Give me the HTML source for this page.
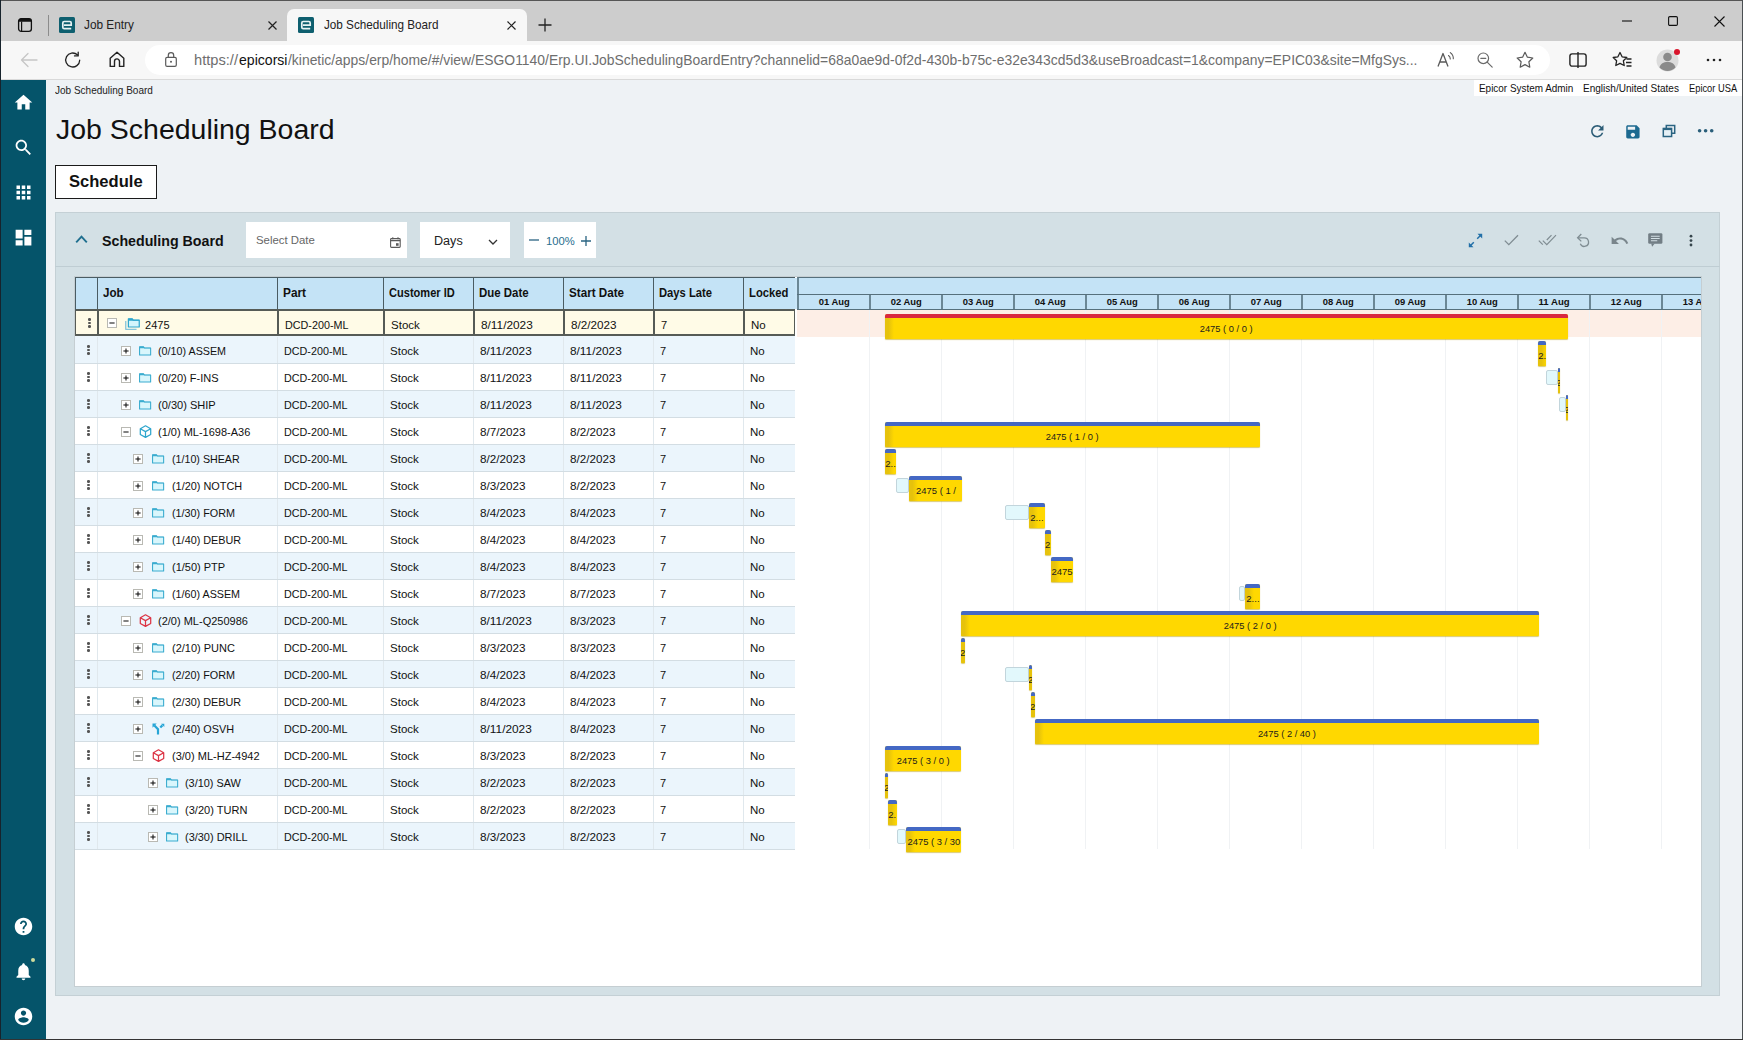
<!DOCTYPE html>
<html lang="en">
<head>
<meta charset="utf-8">
<title>Job Scheduling Board</title>
<style>
*{box-sizing:border-box;margin:0;padding:0}
html,body{width:1743px;height:1040px;overflow:hidden}
body{font-family:"Liberation Sans",sans-serif;color:#111;background:#eef2f5;position:relative}
.t{display:inline-block;transform-origin:0 50%;white-space:nowrap;line-height:inherit;vertical-align:top}
.t.tc{transform-origin:50% 50%}
svg{display:block;overflow:visible}
.ab{position:absolute}
/* browser chrome */
#tabstrip{position:absolute;left:0;top:0;width:1743px;height:41px;background:#cdcdcd;border-top:1px solid #565656}
#toolbar{position:absolute;left:0;top:41px;width:1743px;height:39px;background:#f7f7f7;border-bottom:1px solid #d9d9d9}
#frameL{position:absolute;left:0;top:0;width:1px;height:1040px;background:#17232c}
#frameR{position:absolute;left:1742px;top:0;width:1px;height:1040px;background:#4a4f52}
#frameB{position:absolute;left:0;top:1039px;width:1743px;height:1px;background:#333}
.tab{position:absolute;top:9px;height:32px;color:#222;line-height:32px}
.tab.act{background:#f7f7f7;border-radius:7px 7px 0 0}
.tab .tt{position:absolute;top:0;white-space:nowrap}
.fav{position:absolute;top:8px;width:16px;height:16px;background:#0e5f6f;border-radius:2px}
#url{position:absolute;left:145px;top:45px;width:1405px;height:30px;border-radius:15px;background:#fff}
.u{position:absolute;top:45px;line-height:30px;color:#6e6e6e;white-space:nowrap}
/* app */
#side{position:absolute;left:0;top:80px;width:46px;height:959px;background:#05546a}
#crumb{position:absolute;left:55px;top:84px;color:#222;line-height:14px;white-space:nowrap}
#chips{position:absolute;left:1474px;top:80px;width:1268px;height:16px;background:#fff}
.chip{position:absolute;top:81px;line-height:15px;color:#111;white-space:nowrap}
#title{position:absolute;left:55.5px;top:108.9px;line-height:40px;color:#111;white-space:nowrap}
#sched{position:absolute;left:55px;top:165px;width:102px;height:33.5px;border:1px solid #1a1a1a;background:#fff;line-height:31.5px;color:#111}
#sched .t{position:absolute;left:13.3px;top:0}
#panel{position:absolute;left:55px;top:212px;width:1665px;height:784px;background:#d3e0e5;border:1px solid #c4d0d5}
#phline{position:absolute;left:55px;top:266px;width:1665px;height:1px;background:#bfcdd3}
#ptitle{position:absolute;left:101.5px;top:228.8px;line-height:24px;color:#111;white-space:nowrap}
.inp{position:absolute;top:222px;height:36px;background:#fff;line-height:36px}
.inp .t{position:absolute;top:0}
#grid{position:absolute;left:75px;top:277px;width:1626px;height:709px;background:#fff;box-shadow:0 0 0 1px #c5ced2}
/* table */
#thead{position:absolute;left:75px;top:277px;width:720px;height:34px;background:#c4e3f6;border-top:1px solid #4a5c63;border-bottom:2px solid #565b56;border-left:1px solid #4a5c63}
.th{position:absolute;top:0;height:31px;line-height:31px;color:#111;border-left:1px solid #4a5c63;padding-left:5px;white-space:nowrap}
.row{position:absolute;left:75px;width:720px;height:27px;border-bottom:1px solid #d3dde3;line-height:28px;background:#fff}
.row.alt{background:#ebf5fc}
.row.sel{box-shadow:inset 1px 0 0 #565b56,inset -1px 0 0 #565b56;background:#fffbe7;height:25px;border-bottom:2px solid #565b56;line-height:29px}
.row .c{position:absolute;top:0;height:26px;border-left:1px solid #e0e8ed;padding-left:6px;white-space:nowrap;overflow:hidden}
.row.sel .c{border-left:2px solid #565b56;height:23px;padding-left:6px}
.c.job{left:22px;width:180px}.c.part{left:202px;width:106px}.c.cust{left:308px;width:90px}.c.due{left:398px;width:90px}.c.start{left:488px;width:90px}.c.late{left:578px;width:90px}.c.lock{left:668px;width:52px}
.dots{position:absolute;left:12px;top:8px;width:3px}
.row.sel .dots{left:13px;top:7px}
.dots i{display:block;width:2.5px;height:2.5px;background:#555;margin-bottom:1.2px;border-radius:1.25px}
.exw,.icw,.jt{position:absolute;top:0}
.exw svg{position:absolute;top:8.5px;left:0}
.row.sel .exw svg,.row.sel .icw svg{top:7px}
.icw svg{position:absolute;top:8.5px;left:0}
.icw svg[height="13"]{top:7px}
.icw svg[height="12"]{top:8px}
/* gantt */
.gantt{position:absolute;left:797px;top:277px;width:904px;height:709px;overflow:hidden}
.gh1{position:absolute;left:0;top:0;width:904px;height:18px;background:#c4e3f6;border-top:1px solid #56707c;border-left:2px solid #6b8795}
.gh2{position:absolute;left:0;top:17px;width:904px;height:16px;background:#c4e3f6;border-top:1px solid #56707c;border-bottom:1px solid #56707c}
.gd{position:absolute;top:0;width:72px;height:14px;border-left:2px solid #6b8795;line-height:15px;text-align:center;color:#111}
.gsel{position:absolute;left:0;top:33px;width:904px;height:27px;background:#fdeee6}
.gl{position:absolute;top:33px;width:1px;height:539px;background:#f0f2f4}
.bar{position:absolute;height:25px;background:#ffd800;box-shadow:0 1px 1px rgba(190,160,0,.55);overflow:hidden;line-height:21px;text-align:center;white-space:nowrap;color:#1c1c1c;border-radius:2px 2px 1px 1px}
.bar b{position:absolute;left:0;top:0;width:100%;height:4px;background:#4468c4}
.bar.r b{background:#d9283f}
.bar:before{content:"";position:absolute;left:0;top:4px;width:9px;height:21px;background:linear-gradient(90deg,#e6c20c 0,#e6c20c 40%,#ffd800 100%)}
.bar span.l{position:absolute;left:-40px;right:-40px;top:4px;height:21px}
.lb{position:absolute;height:14.5px;background:#e2f8fc;border:1px solid #c2d5dc;border-radius:2px}
</style>
</head>
<body>
<div id="tabstrip"></div>
<div id="toolbar"></div>
<!-- tabs -->
<div class="tab" style="left:50px;width:236px"><span class="tt" style="left:34px"><span class="t" style="font-size:12.76px;transform:scaleX(0.928);">Job Entry</span></span></div>
<div class="tab act" style="left:287px;width:240px"><span class="tt" style="left:37px"><span class="t" style="font-size:12.76px;transform:scaleX(0.918);">Job Scheduling Board</span></span></div>
<div id="url"></div>
<div class="u" style="left:194px"><span class="t" style="font-size:14.36px;transform:scaleX(1.021);">https://</span></div>
<div class="u" style="left:239px;color:#111"><span class="t" style="font-size:14.36px;transform:scaleX(0.98);">epicorsi</span></div>
<div class="u" style="left:288px"><span class="t" style="font-size:14.36px;transform:scaleX(0.968);">/kinetic/apps/erp/home/#/view/ESGO1140/Erp.UI.JobSchedulingBoardEntry?channelid=68a0ae9d-0f2d-430b-b75c-e32e343cd5d3&amp;useBroadcast=1&amp;company=EPIC03&amp;site=MfgSys...</span></div>
<div id="side"></div>
<div id="crumb"><span class="t" style="font-size:10.19px;transform:scaleX(0.983);">Job Scheduling Board</span></div>
<div id="chips"></div>
<div class="chip" style="left:1479px"><span class="t" style="font-size:10.19px;transform:scaleX(0.976);">Epicor System Admin</span></div>
<div class="chip" style="left:1583px"><span class="t" style="font-size:10.19px;transform:scaleX(0.986);">English/United States</span></div>
<div class="chip" style="left:1689px"><span class="t" style="font-size:10.19px;transform:scaleX(0.915);">Epicor USA</span></div>
<div id="title"><span class="t" style="font-size:28.36px;transform:scaleX(1.004);">Job Scheduling Board</span></div>
<div id="sched"><span class="t" style="font-size:17.28px;font-weight:bold;transform:scaleX(0.959);">Schedule</span></div>
<div id="panel"></div>
<div id="phline"></div>
<div id="ptitle"><span class="t" style="font-size:15.07px;font-weight:bold;transform:scaleX(0.944);">Scheduling Board</span></div>
<div class="inp" style="left:246px;width:161px;color:#666"><span class="ab" style="left:10px;top:0"><span class="t" style="font-size:11.08px;transform:scaleX(1.027);">Select Date</span></span></div>
<div class="inp" style="left:420px;width:90px;color:#222"><span class="ab" style="left:14.300px;top:0.700px"><span class="t" style="font-size:12.85px;transform:scaleX(0.981);">Days</span></span></div>
<div class="inp" style="left:524px;width:72px;color:#2a6f8f"><span class="ab" style="left:21.700px;top:1px"><span class="t" style="font-size:11.08px;transform:scaleX(1.013);">100%</span></span></div>
<div id="grid"></div>
<i class="ab" style="left:795px;top:278px;width:2px;height:31px;background:#c9e6f8"></i>
<div id="thead">
<span class="th" style="left:21px;width:180px"><span class="t" style="font-size:11.96px;font-weight:bold;transform:scaleX(0.972);">Job</span></span>
<span class="th" style="left:201px;width:106px"><span class="t" style="font-size:11.96px;font-weight:bold;transform:scaleX(0.992);">Part</span></span>
<span class="th" style="left:307px;width:90px"><span class="t" style="font-size:11.96px;font-weight:bold;transform:scaleX(0.925);">Customer ID</span></span>
<span class="th" style="left:397px;width:90px"><span class="t" style="font-size:11.96px;font-weight:bold;transform:scaleX(0.959);">Due Date</span></span>
<span class="th" style="left:487px;width:90px"><span class="t" style="font-size:11.96px;font-weight:bold;transform:scaleX(0.976);">Start Date</span></span>
<span class="th" style="left:577px;width:90px"><span class="t" style="font-size:11.96px;font-weight:bold;transform:scaleX(0.938);">Days Late</span></span>
<span class="th" style="left:667px;width:52px"><span class="t" style="font-size:11.96px;font-weight:bold;transform:scaleX(0.943);">Locked</span></span>
</div>

<div class="row sel" style="top:311px">
<span class="dots"><i></i><i></i><i></i></span>
<span class="c job"><span class="exw" style="left:8px"><svg class="ex" width="10" height="10" viewBox="0 0 10 10"><rect x="0.5" y="0.5" width="9" height="9" fill="#fff" stroke="#b9b9b3"/><path d="M2.4 5h5.2" stroke="#111" stroke-width="1.05"/></svg></span><span class="icw" style="left:26px"><svg class="ic" width="15" height="12.4" viewBox="0 0 16 13"><path d="M0.8 3.2v8.8h11.5" fill="none" stroke="#86c4da" stroke-width="1.4" stroke-linejoin="round"/><path d="M3.6 0.8h4.2l1 1.3h6.4v7.4h-11.6z" fill="#d3f5fc" stroke="#2fa6cd" stroke-width="1.3" stroke-linejoin="round"/><path d="M3.6 0.5h4.2l1 1.3h6.4v1h-11.6z" fill="#2fa6cd"/></svg></span><span class="jt" style="left:46.400000000000006px"><span class="t" style="font-size:11.52px;transform:scaleX(0.96);">2475</span></span></span>
<span class="c part"><span class="t" style="font-size:11.52px;transform:scaleX(0.935);">DCD-200-ML</span></span><span class="c cust"><span class="t" style="font-size:11.52px;transform:scaleX(1.0);">Stock</span></span><span class="c due"><span class="t" style="font-size:11.52px;transform:scaleX(1.027);">8/11/2023</span></span><span class="c start"><span class="t" style="font-size:11.52px;transform:scaleX(1.016);">8/2/2023</span></span><span class="c late"><span class="t" style="font-size:11.52px;transform:scaleX(0.96);">7</span></span><span class="c lock"><span class="t" style="font-size:11.52px;transform:scaleX(1.0);">No</span></span>
</div>
<div class="row alt" style="top:336px;height:2px;border:none"></div>
<div class="row alt" style="top:337px">
<span class="dots"><i></i><i></i><i></i></span>
<span class="c job"><span class="exw" style="left:22.700000000000003px"><svg class="ex" width="10" height="10" viewBox="0 0 10 10"><rect x="0.5" y="0.5" width="9" height="9" fill="#fff" stroke="#b9b9b3"/><path d="M2.4 5h5.2" stroke="#111" stroke-width="1.05"/><path d="M5 2.4v5.2" stroke="#111" stroke-width="1.05"/></svg></span><span class="icw" style="left:41px"><svg class="ic" width="12.2" height="9.6" viewBox="0 0 13 10"><path d="M0.6 0.7h4.2l1 1.3h6.6v7.4h-11.8z" fill="#d9f6fc" stroke="#3aaccf" stroke-width="1.15" stroke-linejoin="round"/><path d="M0.6 0.5h4.2l1 1.3h6.6v0.5h-11.8z" fill="#3aaccf"/></svg></span><span class="jt" style="left:60.30000000000001px"><span class="t" style="font-size:11.52px;transform:scaleX(0.933);">(0/10) ASSEM</span></span></span>
<span class="c part"><span class="t" style="font-size:11.52px;transform:scaleX(0.935);">DCD-200-ML</span></span><span class="c cust"><span class="t" style="font-size:11.52px;transform:scaleX(1.0);">Stock</span></span><span class="c due"><span class="t" style="font-size:11.52px;transform:scaleX(1.027);">8/11/2023</span></span><span class="c start"><span class="t" style="font-size:11.52px;transform:scaleX(1.027);">8/11/2023</span></span><span class="c late"><span class="t" style="font-size:11.52px;transform:scaleX(0.96);">7</span></span><span class="c lock"><span class="t" style="font-size:11.52px;transform:scaleX(1.0);">No</span></span>
</div>
<div class="row" style="top:364px">
<span class="dots"><i></i><i></i><i></i></span>
<span class="c job"><span class="exw" style="left:22.700000000000003px"><svg class="ex" width="10" height="10" viewBox="0 0 10 10"><rect x="0.5" y="0.5" width="9" height="9" fill="#fff" stroke="#b9b9b3"/><path d="M2.4 5h5.2" stroke="#111" stroke-width="1.05"/><path d="M5 2.4v5.2" stroke="#111" stroke-width="1.05"/></svg></span><span class="icw" style="left:41px"><svg class="ic" width="12.2" height="9.6" viewBox="0 0 13 10"><path d="M0.6 0.7h4.2l1 1.3h6.6v7.4h-11.8z" fill="#d9f6fc" stroke="#3aaccf" stroke-width="1.15" stroke-linejoin="round"/><path d="M0.6 0.5h4.2l1 1.3h6.6v0.5h-11.8z" fill="#3aaccf"/></svg></span><span class="jt" style="left:60.30000000000001px"><span class="t" style="font-size:11.52px;transform:scaleX(0.956);">(0/20) F-INS</span></span></span>
<span class="c part"><span class="t" style="font-size:11.52px;transform:scaleX(0.935);">DCD-200-ML</span></span><span class="c cust"><span class="t" style="font-size:11.52px;transform:scaleX(1.0);">Stock</span></span><span class="c due"><span class="t" style="font-size:11.52px;transform:scaleX(1.027);">8/11/2023</span></span><span class="c start"><span class="t" style="font-size:11.52px;transform:scaleX(1.027);">8/11/2023</span></span><span class="c late"><span class="t" style="font-size:11.52px;transform:scaleX(0.96);">7</span></span><span class="c lock"><span class="t" style="font-size:11.52px;transform:scaleX(1.0);">No</span></span>
</div>
<div class="row alt" style="top:391px">
<span class="dots"><i></i><i></i><i></i></span>
<span class="c job"><span class="exw" style="left:22.700000000000003px"><svg class="ex" width="10" height="10" viewBox="0 0 10 10"><rect x="0.5" y="0.5" width="9" height="9" fill="#fff" stroke="#b9b9b3"/><path d="M2.4 5h5.2" stroke="#111" stroke-width="1.05"/><path d="M5 2.4v5.2" stroke="#111" stroke-width="1.05"/></svg></span><span class="icw" style="left:41px"><svg class="ic" width="12.2" height="9.6" viewBox="0 0 13 10"><path d="M0.6 0.7h4.2l1 1.3h6.6v7.4h-11.8z" fill="#d9f6fc" stroke="#3aaccf" stroke-width="1.15" stroke-linejoin="round"/><path d="M0.6 0.5h4.2l1 1.3h6.6v0.5h-11.8z" fill="#3aaccf"/></svg></span><span class="jt" style="left:60.30000000000001px"><span class="t" style="font-size:11.52px;transform:scaleX(0.959);">(0/30) SHIP</span></span></span>
<span class="c part"><span class="t" style="font-size:11.52px;transform:scaleX(0.935);">DCD-200-ML</span></span><span class="c cust"><span class="t" style="font-size:11.52px;transform:scaleX(1.0);">Stock</span></span><span class="c due"><span class="t" style="font-size:11.52px;transform:scaleX(1.027);">8/11/2023</span></span><span class="c start"><span class="t" style="font-size:11.52px;transform:scaleX(1.027);">8/11/2023</span></span><span class="c late"><span class="t" style="font-size:11.52px;transform:scaleX(0.96);">7</span></span><span class="c lock"><span class="t" style="font-size:11.52px;transform:scaleX(1.0);">No</span></span>
</div>
<div class="row" style="top:418px">
<span class="dots"><i></i><i></i><i></i></span>
<span class="c job"><span class="exw" style="left:22.700000000000003px"><svg class="ex" width="10" height="10" viewBox="0 0 10 10"><rect x="0.5" y="0.5" width="9" height="9" fill="#fff" stroke="#b9b9b3"/><path d="M2.4 5h5.2" stroke="#111" stroke-width="1.05"/></svg></span><span class="icw" style="left:41px"><svg class="ic" width="13" height="13" viewBox="0 0 13 13"><path d="M6.5 0.8l5.2 2.9v5.8L6.5 12.4 1.3 9.5V3.7z M1.3 3.7l5.2 2.9 5.2-2.9M6.5 6.6v5.8" fill="none" stroke="#2fa6cd" stroke-width="1.25" stroke-linejoin="round"/></svg></span><span class="jt" style="left:60.30000000000001px"><span class="t" style="font-size:11.52px;transform:scaleX(0.955);">(1/0) ML-1698-A36</span></span></span>
<span class="c part"><span class="t" style="font-size:11.52px;transform:scaleX(0.935);">DCD-200-ML</span></span><span class="c cust"><span class="t" style="font-size:11.52px;transform:scaleX(1.0);">Stock</span></span><span class="c due"><span class="t" style="font-size:11.52px;transform:scaleX(1.016);">8/7/2023</span></span><span class="c start"><span class="t" style="font-size:11.52px;transform:scaleX(1.016);">8/2/2023</span></span><span class="c late"><span class="t" style="font-size:11.52px;transform:scaleX(0.96);">7</span></span><span class="c lock"><span class="t" style="font-size:11.52px;transform:scaleX(1.0);">No</span></span>
</div>
<div class="row alt" style="top:445px">
<span class="dots"><i></i><i></i><i></i></span>
<span class="c job"><span class="exw" style="left:35.30000000000001px"><svg class="ex" width="10" height="10" viewBox="0 0 10 10"><rect x="0.5" y="0.5" width="9" height="9" fill="#fff" stroke="#b9b9b3"/><path d="M2.4 5h5.2" stroke="#111" stroke-width="1.05"/><path d="M5 2.4v5.2" stroke="#111" stroke-width="1.05"/></svg></span><span class="icw" style="left:54.30000000000001px"><svg class="ic" width="12.2" height="9.6" viewBox="0 0 13 10"><path d="M0.6 0.7h4.2l1 1.3h6.6v7.4h-11.8z" fill="#d9f6fc" stroke="#3aaccf" stroke-width="1.15" stroke-linejoin="round"/><path d="M0.6 0.5h4.2l1 1.3h6.6v0.5h-11.8z" fill="#3aaccf"/></svg></span><span class="jt" style="left:73.80000000000001px"><span class="t" style="font-size:11.52px;transform:scaleX(0.928);">(1/10) SHEAR</span></span></span>
<span class="c part"><span class="t" style="font-size:11.52px;transform:scaleX(0.935);">DCD-200-ML</span></span><span class="c cust"><span class="t" style="font-size:11.52px;transform:scaleX(1.0);">Stock</span></span><span class="c due"><span class="t" style="font-size:11.52px;transform:scaleX(1.016);">8/2/2023</span></span><span class="c start"><span class="t" style="font-size:11.52px;transform:scaleX(1.016);">8/2/2023</span></span><span class="c late"><span class="t" style="font-size:11.52px;transform:scaleX(0.96);">7</span></span><span class="c lock"><span class="t" style="font-size:11.52px;transform:scaleX(1.0);">No</span></span>
</div>
<div class="row" style="top:472px">
<span class="dots"><i></i><i></i><i></i></span>
<span class="c job"><span class="exw" style="left:35.30000000000001px"><svg class="ex" width="10" height="10" viewBox="0 0 10 10"><rect x="0.5" y="0.5" width="9" height="9" fill="#fff" stroke="#b9b9b3"/><path d="M2.4 5h5.2" stroke="#111" stroke-width="1.05"/><path d="M5 2.4v5.2" stroke="#111" stroke-width="1.05"/></svg></span><span class="icw" style="left:54.30000000000001px"><svg class="ic" width="12.2" height="9.6" viewBox="0 0 13 10"><path d="M0.6 0.7h4.2l1 1.3h6.6v7.4h-11.8z" fill="#d9f6fc" stroke="#3aaccf" stroke-width="1.15" stroke-linejoin="round"/><path d="M0.6 0.5h4.2l1 1.3h6.6v0.5h-11.8z" fill="#3aaccf"/></svg></span><span class="jt" style="left:73.80000000000001px"><span class="t" style="font-size:11.52px;transform:scaleX(0.945);">(1/20) NOTCH</span></span></span>
<span class="c part"><span class="t" style="font-size:11.52px;transform:scaleX(0.935);">DCD-200-ML</span></span><span class="c cust"><span class="t" style="font-size:11.52px;transform:scaleX(1.0);">Stock</span></span><span class="c due"><span class="t" style="font-size:11.52px;transform:scaleX(1.016);">8/3/2023</span></span><span class="c start"><span class="t" style="font-size:11.52px;transform:scaleX(1.016);">8/2/2023</span></span><span class="c late"><span class="t" style="font-size:11.52px;transform:scaleX(0.96);">7</span></span><span class="c lock"><span class="t" style="font-size:11.52px;transform:scaleX(1.0);">No</span></span>
</div>
<div class="row alt" style="top:499px">
<span class="dots"><i></i><i></i><i></i></span>
<span class="c job"><span class="exw" style="left:35.30000000000001px"><svg class="ex" width="10" height="10" viewBox="0 0 10 10"><rect x="0.5" y="0.5" width="9" height="9" fill="#fff" stroke="#b9b9b3"/><path d="M2.4 5h5.2" stroke="#111" stroke-width="1.05"/><path d="M5 2.4v5.2" stroke="#111" stroke-width="1.05"/></svg></span><span class="icw" style="left:54.30000000000001px"><svg class="ic" width="12.2" height="9.6" viewBox="0 0 13 10"><path d="M0.6 0.7h4.2l1 1.3h6.6v7.4h-11.8z" fill="#d9f6fc" stroke="#3aaccf" stroke-width="1.15" stroke-linejoin="round"/><path d="M0.6 0.5h4.2l1 1.3h6.6v0.5h-11.8z" fill="#3aaccf"/></svg></span><span class="jt" style="left:73.80000000000001px"><span class="t" style="font-size:11.52px;transform:scaleX(0.938);">(1/30) FORM</span></span></span>
<span class="c part"><span class="t" style="font-size:11.52px;transform:scaleX(0.935);">DCD-200-ML</span></span><span class="c cust"><span class="t" style="font-size:11.52px;transform:scaleX(1.0);">Stock</span></span><span class="c due"><span class="t" style="font-size:11.52px;transform:scaleX(1.016);">8/4/2023</span></span><span class="c start"><span class="t" style="font-size:11.52px;transform:scaleX(1.016);">8/4/2023</span></span><span class="c late"><span class="t" style="font-size:11.52px;transform:scaleX(0.96);">7</span></span><span class="c lock"><span class="t" style="font-size:11.52px;transform:scaleX(1.0);">No</span></span>
</div>
<div class="row" style="top:526px">
<span class="dots"><i></i><i></i><i></i></span>
<span class="c job"><span class="exw" style="left:35.30000000000001px"><svg class="ex" width="10" height="10" viewBox="0 0 10 10"><rect x="0.5" y="0.5" width="9" height="9" fill="#fff" stroke="#b9b9b3"/><path d="M2.4 5h5.2" stroke="#111" stroke-width="1.05"/><path d="M5 2.4v5.2" stroke="#111" stroke-width="1.05"/></svg></span><span class="icw" style="left:54.30000000000001px"><svg class="ic" width="12.2" height="9.6" viewBox="0 0 13 10"><path d="M0.6 0.7h4.2l1 1.3h6.6v7.4h-11.8z" fill="#d9f6fc" stroke="#3aaccf" stroke-width="1.15" stroke-linejoin="round"/><path d="M0.6 0.5h4.2l1 1.3h6.6v0.5h-11.8z" fill="#3aaccf"/></svg></span><span class="jt" style="left:73.80000000000001px"><span class="t" style="font-size:11.52px;transform:scaleX(0.94);">(1/40) DEBUR</span></span></span>
<span class="c part"><span class="t" style="font-size:11.52px;transform:scaleX(0.935);">DCD-200-ML</span></span><span class="c cust"><span class="t" style="font-size:11.52px;transform:scaleX(1.0);">Stock</span></span><span class="c due"><span class="t" style="font-size:11.52px;transform:scaleX(1.016);">8/4/2023</span></span><span class="c start"><span class="t" style="font-size:11.52px;transform:scaleX(1.016);">8/4/2023</span></span><span class="c late"><span class="t" style="font-size:11.52px;transform:scaleX(0.96);">7</span></span><span class="c lock"><span class="t" style="font-size:11.52px;transform:scaleX(1.0);">No</span></span>
</div>
<div class="row alt" style="top:553px">
<span class="dots"><i></i><i></i><i></i></span>
<span class="c job"><span class="exw" style="left:35.30000000000001px"><svg class="ex" width="10" height="10" viewBox="0 0 10 10"><rect x="0.5" y="0.5" width="9" height="9" fill="#fff" stroke="#b9b9b3"/><path d="M2.4 5h5.2" stroke="#111" stroke-width="1.05"/><path d="M5 2.4v5.2" stroke="#111" stroke-width="1.05"/></svg></span><span class="icw" style="left:54.30000000000001px"><svg class="ic" width="12.2" height="9.6" viewBox="0 0 13 10"><path d="M0.6 0.7h4.2l1 1.3h6.6v7.4h-11.8z" fill="#d9f6fc" stroke="#3aaccf" stroke-width="1.15" stroke-linejoin="round"/><path d="M0.6 0.5h4.2l1 1.3h6.6v0.5h-11.8z" fill="#3aaccf"/></svg></span><span class="jt" style="left:73.80000000000001px"><span class="t" style="font-size:11.52px;transform:scaleX(0.954);">(1/50) PTP</span></span></span>
<span class="c part"><span class="t" style="font-size:11.52px;transform:scaleX(0.935);">DCD-200-ML</span></span><span class="c cust"><span class="t" style="font-size:11.52px;transform:scaleX(1.0);">Stock</span></span><span class="c due"><span class="t" style="font-size:11.52px;transform:scaleX(1.016);">8/4/2023</span></span><span class="c start"><span class="t" style="font-size:11.52px;transform:scaleX(1.016);">8/4/2023</span></span><span class="c late"><span class="t" style="font-size:11.52px;transform:scaleX(0.96);">7</span></span><span class="c lock"><span class="t" style="font-size:11.52px;transform:scaleX(1.0);">No</span></span>
</div>
<div class="row" style="top:580px">
<span class="dots"><i></i><i></i><i></i></span>
<span class="c job"><span class="exw" style="left:35.30000000000001px"><svg class="ex" width="10" height="10" viewBox="0 0 10 10"><rect x="0.5" y="0.5" width="9" height="9" fill="#fff" stroke="#b9b9b3"/><path d="M2.4 5h5.2" stroke="#111" stroke-width="1.05"/><path d="M5 2.4v5.2" stroke="#111" stroke-width="1.05"/></svg></span><span class="icw" style="left:54.30000000000001px"><svg class="ic" width="12.2" height="9.6" viewBox="0 0 13 10"><path d="M0.6 0.7h4.2l1 1.3h6.6v7.4h-11.8z" fill="#d9f6fc" stroke="#3aaccf" stroke-width="1.15" stroke-linejoin="round"/><path d="M0.6 0.5h4.2l1 1.3h6.6v0.5h-11.8z" fill="#3aaccf"/></svg></span><span class="jt" style="left:73.80000000000001px"><span class="t" style="font-size:11.52px;transform:scaleX(0.933);">(1/60) ASSEM</span></span></span>
<span class="c part"><span class="t" style="font-size:11.52px;transform:scaleX(0.935);">DCD-200-ML</span></span><span class="c cust"><span class="t" style="font-size:11.52px;transform:scaleX(1.0);">Stock</span></span><span class="c due"><span class="t" style="font-size:11.52px;transform:scaleX(1.016);">8/7/2023</span></span><span class="c start"><span class="t" style="font-size:11.52px;transform:scaleX(1.016);">8/7/2023</span></span><span class="c late"><span class="t" style="font-size:11.52px;transform:scaleX(0.96);">7</span></span><span class="c lock"><span class="t" style="font-size:11.52px;transform:scaleX(1.0);">No</span></span>
</div>
<div class="row alt" style="top:607px">
<span class="dots"><i></i><i></i><i></i></span>
<span class="c job"><span class="exw" style="left:22.700000000000003px"><svg class="ex" width="10" height="10" viewBox="0 0 10 10"><rect x="0.5" y="0.5" width="9" height="9" fill="#fff" stroke="#b9b9b3"/><path d="M2.4 5h5.2" stroke="#111" stroke-width="1.05"/></svg></span><span class="icw" style="left:41px"><svg class="ic" width="13" height="13" viewBox="0 0 13 13"><path d="M6.5 0.8l5.2 2.9v5.8L6.5 12.4 1.3 9.5V3.7z M1.3 3.7l5.2 2.9 5.2-2.9M6.5 6.6v5.8" fill="none" stroke="#dc3545" stroke-width="1.25" stroke-linejoin="round"/></svg></span><span class="jt" style="left:60.30000000000001px"><span class="t" style="font-size:11.52px;transform:scaleX(0.956);">(2/0) ML-Q250986</span></span></span>
<span class="c part"><span class="t" style="font-size:11.52px;transform:scaleX(0.935);">DCD-200-ML</span></span><span class="c cust"><span class="t" style="font-size:11.52px;transform:scaleX(1.0);">Stock</span></span><span class="c due"><span class="t" style="font-size:11.52px;transform:scaleX(1.027);">8/11/2023</span></span><span class="c start"><span class="t" style="font-size:11.52px;transform:scaleX(1.016);">8/3/2023</span></span><span class="c late"><span class="t" style="font-size:11.52px;transform:scaleX(0.96);">7</span></span><span class="c lock"><span class="t" style="font-size:11.52px;transform:scaleX(1.0);">No</span></span>
</div>
<div class="row" style="top:634px">
<span class="dots"><i></i><i></i><i></i></span>
<span class="c job"><span class="exw" style="left:35.30000000000001px"><svg class="ex" width="10" height="10" viewBox="0 0 10 10"><rect x="0.5" y="0.5" width="9" height="9" fill="#fff" stroke="#b9b9b3"/><path d="M2.4 5h5.2" stroke="#111" stroke-width="1.05"/><path d="M5 2.4v5.2" stroke="#111" stroke-width="1.05"/></svg></span><span class="icw" style="left:54.30000000000001px"><svg class="ic" width="12.2" height="9.6" viewBox="0 0 13 10"><path d="M0.6 0.7h4.2l1 1.3h6.6v7.4h-11.8z" fill="#d9f6fc" stroke="#3aaccf" stroke-width="1.15" stroke-linejoin="round"/><path d="M0.6 0.5h4.2l1 1.3h6.6v0.5h-11.8z" fill="#3aaccf"/></svg></span><span class="jt" style="left:73.80000000000001px"><span class="t" style="font-size:11.52px;transform:scaleX(0.953);">(2/10) PUNC</span></span></span>
<span class="c part"><span class="t" style="font-size:11.52px;transform:scaleX(0.935);">DCD-200-ML</span></span><span class="c cust"><span class="t" style="font-size:11.52px;transform:scaleX(1.0);">Stock</span></span><span class="c due"><span class="t" style="font-size:11.52px;transform:scaleX(1.016);">8/3/2023</span></span><span class="c start"><span class="t" style="font-size:11.52px;transform:scaleX(1.016);">8/3/2023</span></span><span class="c late"><span class="t" style="font-size:11.52px;transform:scaleX(0.96);">7</span></span><span class="c lock"><span class="t" style="font-size:11.52px;transform:scaleX(1.0);">No</span></span>
</div>
<div class="row alt" style="top:661px">
<span class="dots"><i></i><i></i><i></i></span>
<span class="c job"><span class="exw" style="left:35.30000000000001px"><svg class="ex" width="10" height="10" viewBox="0 0 10 10"><rect x="0.5" y="0.5" width="9" height="9" fill="#fff" stroke="#b9b9b3"/><path d="M2.4 5h5.2" stroke="#111" stroke-width="1.05"/><path d="M5 2.4v5.2" stroke="#111" stroke-width="1.05"/></svg></span><span class="icw" style="left:54.30000000000001px"><svg class="ic" width="12.2" height="9.6" viewBox="0 0 13 10"><path d="M0.6 0.7h4.2l1 1.3h6.6v7.4h-11.8z" fill="#d9f6fc" stroke="#3aaccf" stroke-width="1.15" stroke-linejoin="round"/><path d="M0.6 0.5h4.2l1 1.3h6.6v0.5h-11.8z" fill="#3aaccf"/></svg></span><span class="jt" style="left:73.80000000000001px"><span class="t" style="font-size:11.52px;transform:scaleX(0.938);">(2/20) FORM</span></span></span>
<span class="c part"><span class="t" style="font-size:11.52px;transform:scaleX(0.935);">DCD-200-ML</span></span><span class="c cust"><span class="t" style="font-size:11.52px;transform:scaleX(1.0);">Stock</span></span><span class="c due"><span class="t" style="font-size:11.52px;transform:scaleX(1.016);">8/4/2023</span></span><span class="c start"><span class="t" style="font-size:11.52px;transform:scaleX(1.016);">8/4/2023</span></span><span class="c late"><span class="t" style="font-size:11.52px;transform:scaleX(0.96);">7</span></span><span class="c lock"><span class="t" style="font-size:11.52px;transform:scaleX(1.0);">No</span></span>
</div>
<div class="row" style="top:688px">
<span class="dots"><i></i><i></i><i></i></span>
<span class="c job"><span class="exw" style="left:35.30000000000001px"><svg class="ex" width="10" height="10" viewBox="0 0 10 10"><rect x="0.5" y="0.5" width="9" height="9" fill="#fff" stroke="#b9b9b3"/><path d="M2.4 5h5.2" stroke="#111" stroke-width="1.05"/><path d="M5 2.4v5.2" stroke="#111" stroke-width="1.05"/></svg></span><span class="icw" style="left:54.30000000000001px"><svg class="ic" width="12.2" height="9.6" viewBox="0 0 13 10"><path d="M0.6 0.7h4.2l1 1.3h6.6v7.4h-11.8z" fill="#d9f6fc" stroke="#3aaccf" stroke-width="1.15" stroke-linejoin="round"/><path d="M0.6 0.5h4.2l1 1.3h6.6v0.5h-11.8z" fill="#3aaccf"/></svg></span><span class="jt" style="left:73.80000000000001px"><span class="t" style="font-size:11.52px;transform:scaleX(0.94);">(2/30) DEBUR</span></span></span>
<span class="c part"><span class="t" style="font-size:11.52px;transform:scaleX(0.935);">DCD-200-ML</span></span><span class="c cust"><span class="t" style="font-size:11.52px;transform:scaleX(1.0);">Stock</span></span><span class="c due"><span class="t" style="font-size:11.52px;transform:scaleX(1.016);">8/4/2023</span></span><span class="c start"><span class="t" style="font-size:11.52px;transform:scaleX(1.016);">8/4/2023</span></span><span class="c late"><span class="t" style="font-size:11.52px;transform:scaleX(0.96);">7</span></span><span class="c lock"><span class="t" style="font-size:11.52px;transform:scaleX(1.0);">No</span></span>
</div>
<div class="row alt" style="top:715px">
<span class="dots"><i></i><i></i><i></i></span>
<span class="c job"><span class="exw" style="left:35.30000000000001px"><svg class="ex" width="10" height="10" viewBox="0 0 10 10"><rect x="0.5" y="0.5" width="9" height="9" fill="#fff" stroke="#b9b9b3"/><path d="M2.4 5h5.2" stroke="#111" stroke-width="1.05"/><path d="M5 2.4v5.2" stroke="#111" stroke-width="1.05"/></svg></span><span class="icw" style="left:54.30000000000001px"><svg class="ic" width="13" height="12" viewBox="0 0 13 12"><path d="M2.400 2.400L6 6.300v5.300M10.400 2.400L8.300 4.500" fill="none" stroke="#27a5d6" stroke-width="2.200"/><path d="M0.500 0.500h4.200l-4.200 4.200zM12.300 0.700h-3.200l3.200 3.200z" fill="#27a5d6"/></svg></span><span class="jt" style="left:73.80000000000001px"><span class="t" style="font-size:11.52px;transform:scaleX(0.941);">(2/40) OSVH</span></span></span>
<span class="c part"><span class="t" style="font-size:11.52px;transform:scaleX(0.935);">DCD-200-ML</span></span><span class="c cust"><span class="t" style="font-size:11.52px;transform:scaleX(1.0);">Stock</span></span><span class="c due"><span class="t" style="font-size:11.52px;transform:scaleX(1.027);">8/11/2023</span></span><span class="c start"><span class="t" style="font-size:11.52px;transform:scaleX(1.016);">8/4/2023</span></span><span class="c late"><span class="t" style="font-size:11.52px;transform:scaleX(0.96);">7</span></span><span class="c lock"><span class="t" style="font-size:11.52px;transform:scaleX(1.0);">No</span></span>
</div>
<div class="row" style="top:742px">
<span class="dots"><i></i><i></i><i></i></span>
<span class="c job"><span class="exw" style="left:35.30000000000001px"><svg class="ex" width="10" height="10" viewBox="0 0 10 10"><rect x="0.5" y="0.5" width="9" height="9" fill="#fff" stroke="#b9b9b3"/><path d="M2.4 5h5.2" stroke="#111" stroke-width="1.05"/></svg></span><span class="icw" style="left:54.30000000000001px"><svg class="ic" width="13" height="13" viewBox="0 0 13 13"><path d="M6.5 0.8l5.2 2.9v5.8L6.5 12.4 1.3 9.5V3.7z M1.3 3.7l5.2 2.9 5.2-2.9M6.5 6.6v5.8" fill="none" stroke="#dc3545" stroke-width="1.25" stroke-linejoin="round"/></svg></span><span class="jt" style="left:73.80000000000001px"><span class="t" style="font-size:11.52px;transform:scaleX(0.957);">(3/0) ML-HZ-4942</span></span></span>
<span class="c part"><span class="t" style="font-size:11.52px;transform:scaleX(0.935);">DCD-200-ML</span></span><span class="c cust"><span class="t" style="font-size:11.52px;transform:scaleX(1.0);">Stock</span></span><span class="c due"><span class="t" style="font-size:11.52px;transform:scaleX(1.016);">8/3/2023</span></span><span class="c start"><span class="t" style="font-size:11.52px;transform:scaleX(1.016);">8/2/2023</span></span><span class="c late"><span class="t" style="font-size:11.52px;transform:scaleX(0.96);">7</span></span><span class="c lock"><span class="t" style="font-size:11.52px;transform:scaleX(1.0);">No</span></span>
</div>
<div class="row alt" style="top:769px">
<span class="dots"><i></i><i></i><i></i></span>
<span class="c job"><span class="exw" style="left:49.599999999999994px"><svg class="ex" width="10" height="10" viewBox="0 0 10 10"><rect x="0.5" y="0.5" width="9" height="9" fill="#fff" stroke="#b9b9b3"/><path d="M2.4 5h5.2" stroke="#111" stroke-width="1.05"/><path d="M5 2.4v5.2" stroke="#111" stroke-width="1.05"/></svg></span><span class="icw" style="left:68px"><svg class="ic" width="12.2" height="9.6" viewBox="0 0 13 10"><path d="M0.6 0.7h4.2l1 1.3h6.6v7.4h-11.8z" fill="#d9f6fc" stroke="#3aaccf" stroke-width="1.15" stroke-linejoin="round"/><path d="M0.6 0.5h4.2l1 1.3h6.6v0.5h-11.8z" fill="#3aaccf"/></svg></span><span class="jt" style="left:87.30000000000001px"><span class="t" style="font-size:11.52px;transform:scaleX(0.945);">(3/10) SAW</span></span></span>
<span class="c part"><span class="t" style="font-size:11.52px;transform:scaleX(0.935);">DCD-200-ML</span></span><span class="c cust"><span class="t" style="font-size:11.52px;transform:scaleX(1.0);">Stock</span></span><span class="c due"><span class="t" style="font-size:11.52px;transform:scaleX(1.016);">8/2/2023</span></span><span class="c start"><span class="t" style="font-size:11.52px;transform:scaleX(1.016);">8/2/2023</span></span><span class="c late"><span class="t" style="font-size:11.52px;transform:scaleX(0.96);">7</span></span><span class="c lock"><span class="t" style="font-size:11.52px;transform:scaleX(1.0);">No</span></span>
</div>
<div class="row" style="top:796px">
<span class="dots"><i></i><i></i><i></i></span>
<span class="c job"><span class="exw" style="left:49.599999999999994px"><svg class="ex" width="10" height="10" viewBox="0 0 10 10"><rect x="0.5" y="0.5" width="9" height="9" fill="#fff" stroke="#b9b9b3"/><path d="M2.4 5h5.2" stroke="#111" stroke-width="1.05"/><path d="M5 2.4v5.2" stroke="#111" stroke-width="1.05"/></svg></span><span class="icw" style="left:68px"><svg class="ic" width="12.2" height="9.6" viewBox="0 0 13 10"><path d="M0.6 0.7h4.2l1 1.3h6.6v7.4h-11.8z" fill="#d9f6fc" stroke="#3aaccf" stroke-width="1.15" stroke-linejoin="round"/><path d="M0.6 0.5h4.2l1 1.3h6.6v0.5h-11.8z" fill="#3aaccf"/></svg></span><span class="jt" style="left:87.30000000000001px"><span class="t" style="font-size:11.52px;transform:scaleX(0.959);">(3/20) TURN</span></span></span>
<span class="c part"><span class="t" style="font-size:11.52px;transform:scaleX(0.935);">DCD-200-ML</span></span><span class="c cust"><span class="t" style="font-size:11.52px;transform:scaleX(1.0);">Stock</span></span><span class="c due"><span class="t" style="font-size:11.52px;transform:scaleX(1.016);">8/2/2023</span></span><span class="c start"><span class="t" style="font-size:11.52px;transform:scaleX(1.016);">8/2/2023</span></span><span class="c late"><span class="t" style="font-size:11.52px;transform:scaleX(0.96);">7</span></span><span class="c lock"><span class="t" style="font-size:11.52px;transform:scaleX(1.0);">No</span></span>
</div>
<div class="row alt" style="top:823px">
<span class="dots"><i></i><i></i><i></i></span>
<span class="c job"><span class="exw" style="left:49.599999999999994px"><svg class="ex" width="10" height="10" viewBox="0 0 10 10"><rect x="0.5" y="0.5" width="9" height="9" fill="#fff" stroke="#b9b9b3"/><path d="M2.4 5h5.2" stroke="#111" stroke-width="1.05"/><path d="M5 2.4v5.2" stroke="#111" stroke-width="1.05"/></svg></span><span class="icw" style="left:68px"><svg class="ic" width="12.2" height="9.6" viewBox="0 0 13 10"><path d="M0.6 0.7h4.2l1 1.3h6.6v7.4h-11.8z" fill="#d9f6fc" stroke="#3aaccf" stroke-width="1.15" stroke-linejoin="round"/><path d="M0.6 0.5h4.2l1 1.3h6.6v0.5h-11.8z" fill="#3aaccf"/></svg></span><span class="jt" style="left:87.30000000000001px"><span class="t" style="font-size:11.52px;transform:scaleX(0.951);">(3/30) DRILL</span></span></span>
<span class="c part"><span class="t" style="font-size:11.52px;transform:scaleX(0.935);">DCD-200-ML</span></span><span class="c cust"><span class="t" style="font-size:11.52px;transform:scaleX(1.0);">Stock</span></span><span class="c due"><span class="t" style="font-size:11.52px;transform:scaleX(1.016);">8/3/2023</span></span><span class="c start"><span class="t" style="font-size:11.52px;transform:scaleX(1.016);">8/2/2023</span></span><span class="c late"><span class="t" style="font-size:11.52px;transform:scaleX(0.96);">7</span></span><span class="c lock"><span class="t" style="font-size:11.52px;transform:scaleX(1.0);">No</span></span>
</div>
<div class="gantt">
<div class="gh1"></div><div class="gh2">
<span class="gd" style="left:0px"><span class="t tc" style="font-size:9.31px;font-weight:bold;transform:scaleX(1.011);">01 Aug</span></span>
<span class="gd" style="left:72px"><span class="t tc" style="font-size:9.31px;font-weight:bold;transform:scaleX(1.011);">02 Aug</span></span>
<span class="gd" style="left:144px"><span class="t tc" style="font-size:9.31px;font-weight:bold;transform:scaleX(1.011);">03 Aug</span></span>
<span class="gd" style="left:216px"><span class="t tc" style="font-size:9.31px;font-weight:bold;transform:scaleX(1.011);">04 Aug</span></span>
<span class="gd" style="left:288px"><span class="t tc" style="font-size:9.31px;font-weight:bold;transform:scaleX(1.011);">05 Aug</span></span>
<span class="gd" style="left:360px"><span class="t tc" style="font-size:9.31px;font-weight:bold;transform:scaleX(1.011);">06 Aug</span></span>
<span class="gd" style="left:432px"><span class="t tc" style="font-size:9.31px;font-weight:bold;transform:scaleX(1.011);">07 Aug</span></span>
<span class="gd" style="left:504px"><span class="t tc" style="font-size:9.31px;font-weight:bold;transform:scaleX(1.011);">08 Aug</span></span>
<span class="gd" style="left:576px"><span class="t tc" style="font-size:9.31px;font-weight:bold;transform:scaleX(1.011);">09 Aug</span></span>
<span class="gd" style="left:648px"><span class="t tc" style="font-size:9.31px;font-weight:bold;transform:scaleX(1.011);">10 Aug</span></span>
<span class="gd" style="left:720px"><span class="t tc" style="font-size:9.31px;font-weight:bold;transform:scaleX(1.029);">11 Aug</span></span>
<span class="gd" style="left:792px"><span class="t tc" style="font-size:9.31px;font-weight:bold;transform:scaleX(1.011);">12 Aug</span></span>
<span class="gd" style="left:864px"><span class="t tc" style="font-size:9.31px;font-weight:bold;transform:scaleX(1.011);">13 Aug</span></span>
</div>
<div class="gsel"></div>
<i class="gl" style="left:72px"></i>
<i class="gl" style="left:144px"></i>
<i class="gl" style="left:216px"></i>
<i class="gl" style="left:288px"></i>
<i class="gl" style="left:360px"></i>
<i class="gl" style="left:432px"></i>
<i class="gl" style="left:504px"></i>
<i class="gl" style="left:576px"></i>
<i class="gl" style="left:648px"></i>
<i class="gl" style="left:720px"></i>
<i class="gl" style="left:792px"></i>
<i class="gl" style="left:864px"></i>
<div class="bar r" style="left:88px;top:37px;width:683px"><b></b><span class="l"><span class="t tc" style="font-size:9.93px;transform:scaleX(0.937);">2475 ( 0 / 0 )</span></span></div>
<div class="bar b" style="left:741px;top:64px;width:8px"><b></b><span class="l"><span class="t tc" style="font-size:9.93px;transform:scaleX(0.962);">2.</span></span></div>
<i class="lb" style="left:749px;top:93px;width:12px"></i>
<div class="bar b" style="left:761px;top:91px;width:2px"><b></b><span class="l"><span class="t tc" style="font-size:9.93px;transform:scaleX(0.961);">2</span></span></div>
<i class="lb" style="left:762px;top:120px;width:7px"></i>
<div class="bar b" style="left:769px;top:118px;width:2px"><b></b><span class="l"><span class="t tc" style="font-size:9.93px;transform:scaleX(0.961);">2</span></span></div>
<div class="bar b" style="left:88px;top:145px;width:375px"><b></b><span class="l"><span class="t tc" style="font-size:9.93px;transform:scaleX(0.937);">2475 ( 1 / 0 )</span></span></div>
<div class="bar b" style="left:88px;top:172px;width:11px"><b></b><span class="l"><span class="t tc" style="font-size:9.93px;transform:scaleX(0.963);">2..</span></span></div>
<i class="lb" style="left:99px;top:201px;width:13px"></i>
<div class="bar b" style="left:112px;top:199px;width:53px"><b></b><span class="l"><span class="t tc" style="font-size:9.93px;transform:scaleX(0.952);">2475 ( 1 /</span></span></div>
<i class="lb" style="left:208px;top:228px;width:24px"></i>
<div class="bar b" style="left:232px;top:226px;width:16px"><b></b><span class="l"><span class="t tc" style="font-size:9.93px;transform:scaleX(0.963);">2...</span></span></div>
<div class="bar b" style="left:248px;top:253px;width:6px"><b></b><span class="l"><span class="t tc" style="font-size:9.93px;transform:scaleX(0.961);">2</span></span></div>
<div class="bar b" style="left:254px;top:280px;width:22px"><b></b><span class="l"><span class="t tc" style="font-size:9.93px;transform:scaleX(0.961);">2475</span></span></div>
<i class="lb" style="left:442px;top:309px;width:6px"></i>
<div class="bar b" style="left:448px;top:307px;width:15px"><b></b><span class="l"><span class="t tc" style="font-size:9.93px;transform:scaleX(0.963);">2...</span></span></div>
<div class="bar b" style="left:164px;top:334px;width:577.5px"><b></b><span class="l"><span class="t tc" style="font-size:9.93px;transform:scaleX(0.937);">2475 ( 2 / 0 )</span></span></div>
<div class="bar b" style="left:164px;top:361px;width:4px"><b></b><span class="l"><span class="t tc" style="font-size:9.93px;transform:scaleX(0.961);">2</span></span></div>
<i class="lb" style="left:208px;top:390px;width:24px"></i>
<div class="bar b" style="left:232px;top:388px;width:3px"><b></b><span class="l"><span class="t tc" style="font-size:9.93px;transform:scaleX(0.961);">2</span></span></div>
<div class="bar b" style="left:234px;top:415px;width:4px"><b></b><span class="l"><span class="t tc" style="font-size:9.93px;transform:scaleX(0.961);">2</span></span></div>
<div class="bar b" style="left:238px;top:442px;width:503.5px"><b></b><span class="l"><span class="t tc" style="font-size:9.93px;transform:scaleX(0.939);">2475 ( 2 / 40 )</span></span></div>
<div class="bar b" style="left:88px;top:469px;width:76px"><b></b><span class="l"><span class="t tc" style="font-size:9.93px;transform:scaleX(0.937);">2475 ( 3 / 0 )</span></span></div>
<div class="bar b" style="left:88px;top:496px;width:3px"><b></b><span class="l"><span class="t tc" style="font-size:9.93px;transform:scaleX(0.961);">2</span></span></div>
<div class="bar b" style="left:91px;top:523px;width:9px"><b></b><span class="l"><span class="t tc" style="font-size:9.93px;transform:scaleX(0.962);">2.</span></span></div>
<i class="lb" style="left:100px;top:552px;width:9px"></i>
<div class="bar b" style="left:109px;top:550px;width:55px"><b></b><span class="l"><span class="t tc" style="font-size:9.93px;transform:scaleX(0.945);">2475 ( 3 / 30</span></span></div>
</div>
<!-- browser chrome icons -->
<svg class="ab" style="left:17px;top:17px" width="16" height="16" viewBox="0 0 16 16"><rect x="1.6" y="1.6" width="12.8" height="12.8" rx="2.6" fill="none" stroke="#111" stroke-width="1.3"/><path d="M1.6 4.2a2.6 2.6 0 0 1 2.6-2.6h7.6a2.6 2.6 0 0 1 2.6 2.6v0.6h-12.8z" fill="#111"/><path d="M4.6 4.5v9.8" stroke="#111" stroke-width="1.2"/></svg>
<i class="ab" style="left:48px;top:15px;width:1px;height:21px;background:#8c8c8c"></i>
<svg class="ab" style="left:59px;top:17px" width="16" height="16" viewBox="0 0 16 16"><rect width="16" height="16" rx="1.5" fill="#0e5f6f"/><path d="M5 8.2h7.2V5.9a1.4 1.4 0 0 0-1.4-1.4H5.2A1.4 1.4 0 0 0 3.800 5.900v4.400A1.400 1.400 0 0 0 5.200 11.700h7" fill="none" stroke="#e8f3f4" stroke-width="1.7"/></svg>
<svg class="ab" style="left:298px;top:17px" width="16" height="16" viewBox="0 0 16 16"><rect width="16" height="16" rx="1.5" fill="#0e5f6f"/><path d="M5 8.2h7.2V5.9a1.4 1.4 0 0 0-1.4-1.4H5.2A1.4 1.4 0 0 0 3.800 5.900v4.400A1.400 1.400 0 0 0 5.200 11.700h7" fill="none" stroke="#e8f3f4" stroke-width="1.7"/></svg>
<svg class="ab" style="left:268px;top:21px" width="9" height="9" viewBox="0 0 9 9"><path d="M0.5 0.5l8 8M8.500 0.500l-8 8" stroke="#222" stroke-width="1.2"/></svg>
<svg class="ab" style="left:507px;top:21px" width="9" height="9" viewBox="0 0 9 9"><path d="M0.5 0.500l8 8M8.500 0.500l-8 8" stroke="#222" stroke-width="1.2"/></svg>
<svg class="ab" style="left:538px;top:18px" width="14" height="14" viewBox="0 0 14 14"><path d="M7 0.500v13M0.500 7h13" stroke="#222" stroke-width="1.3"/></svg>
<!-- window controls -->
<svg class="ab" style="left:1622px;top:20px" width="10" height="2" viewBox="0 0 10 2"><path d="M0 1h10" stroke="#111" stroke-width="1.1"/></svg>
<svg class="ab" style="left:1668px;top:16px" width="10" height="10" viewBox="0 0 10 10"><rect x="0.600" y="0.600" width="8.800" height="8.800" rx="1.2" fill="none" stroke="#111" stroke-width="1.1"/></svg>
<svg class="ab" style="left:1714px;top:16px" width="11" height="11" viewBox="0 0 11 11"><path d="M0.500 0.500l10 10M10.500 0.500l-10 10" stroke="#111" stroke-width="1.1"/></svg>
<!-- nav icons -->
<svg class="ab" style="left:20px;top:52px" width="18" height="16" viewBox="0 0 18 16"><path d="M1.500 8h15.500M8 1.500L1.500 8 8 14.500" fill="none" stroke="#c6c6c6" stroke-width="1.3" stroke-linecap="round" stroke-linejoin="round"/></svg>
<svg class="ab" style="left:64px;top:51px" width="18" height="18" viewBox="0 0 18 18"><path d="M15.700 9.200A7 7 0 1 1 13.400 3.800" fill="none" stroke="#222" stroke-width="1.3" stroke-linecap="round"/><path d="M14.200 1.200v3.700h-3.700" fill="none" stroke="#222" stroke-width="1.300" stroke-linecap="round" stroke-linejoin="round"/></svg>
<svg class="ab" style="left:109px;top:51px" width="16" height="17" viewBox="0 0 16 17"><path d="M1.200 7.300L8 1.200l6.800 6.100v8.100h-4.300v-5a2.500 2.500 0 0 0-5 0v5H1.200z" fill="none" stroke="#222" stroke-width="1.4" stroke-linejoin="round"/></svg>
<svg class="ab" style="left:165px;top:52px" width="12" height="15" viewBox="0 0 12 15"><rect x="0.700" y="5.300" width="10.600" height="9" rx="1.400" fill="none" stroke="#5a5a5a" stroke-width="1.2"/><path d="M3.300 5.300V3.400a2.700 2.700 0 0 1 5.400 0v1.900" fill="none" stroke="#5a5a5a" stroke-width="1.200"/><circle cx="6" cy="9.800" r="1" fill="#5a5a5a"/></svg>
<!-- address bar right icons -->
<svg class="ab" style="left:1437px;top:51px" width="18" height="17" viewBox="0 0 18 17"><path d="M1 15.500L6 2.500l5 13M2.700 11h6.600" fill="none" stroke="#5a5a5a" stroke-width="1.300" stroke-linejoin="round"/><path d="M11.500 4.500a4 4 0 0 1 1.800 3.400M13.300 1.600a7 7 0 0 1 3 6.200" fill="none" stroke="#5a5a5a" stroke-width="1.100" stroke-linecap="round"/></svg>
<svg class="ab" style="left:1477px;top:52px" width="16" height="16" viewBox="0 0 16 16"><circle cx="6.300" cy="6.300" r="5.300" fill="none" stroke="#6a6a6a" stroke-width="1.200"/><path d="M10.200 10.200l5 5M3.800 6.300h5" stroke="#6a6a6a" stroke-width="1.200" stroke-linecap="round"/></svg>
<svg class="ab" style="left:1516px;top:51px" width="18" height="17" viewBox="0 0 18 17"><path d="M9 1.300l2.400 4.900 5.400.8-3.900 3.800.9 5.400L9 13.600l-4.800 2.600.9-5.400L1.200 7l5.400-.8z" fill="none" stroke="#5a5a5a" stroke-width="1.200" stroke-linejoin="round"/></svg>
<svg class="ab" style="left:1569px;top:52px" width="18" height="16" viewBox="0 0 18 16"><rect x="0.900" y="1.900" width="16.200" height="12.200" rx="2.200" fill="none" stroke="#222" stroke-width="1.400"/><path d="M9 0v16" stroke="#222" stroke-width="1.400"/></svg>
<svg class="ab" style="left:1612px;top:51px" width="20" height="18" viewBox="0 0 20 18"><path d="M8 1.500l2.100 4.300 4.700.7-3.400 3.300.8 4.700L8 12.300l-4.200 2.200.8-4.700L1.200 6.500l4.700-.7z" fill="none" stroke="#222" stroke-width="1.300" stroke-linejoin="round"/><path d="M14.500 8h5M14 11.500h5.500M14.500 15h5" stroke="#222" stroke-width="1.300"/></svg>
<svg class="ab" style="left:1656px;top:48px" width="26" height="24" viewBox="0 0 26 24"><circle cx="11.500" cy="12.500" r="11" fill="#dcdcdc"/><circle cx="11.500" cy="9" r="4.300" fill="#8a8a8a"/><path d="M3.500 19.500c1-4 4-5.500 8-5.500s7 1.500 8 5.500a11 11 0 0 1-16 0z" fill="#8a8a8a"/><circle cx="21" cy="4" r="3" fill="#d9152c"/></svg>
<svg class="ab" style="left:1706px;top:58px" width="16" height="4" viewBox="0 0 16 4"><circle cx="2" cy="2" r="1.300" fill="#222"/><circle cx="8" cy="2" r="1.300" fill="#222"/><circle cx="14" cy="2" r="1.300" fill="#222"/></svg>
<!-- sidebar icons (material, 21px) -->
<svg class="ab" style="left:13.100px;top:92.300px" width="21" height="21" viewBox="0 0 24 24"><path d="M10 20v-6h4v6h5v-8h3L12 3 2 12h3v8z" fill="#fff"/></svg>
<svg class="ab" style="left:13.100px;top:137px" width="21" height="21" viewBox="0 0 24 24"><path d="M15.500 14h-.79l-.28-.27C15.410 12.590 16 11.110 16 9.500 16 5.910 13.090 3 9.500 3S3 5.910 3 9.500 5.910 16 9.500 16c1.610 0 3.090-.59 4.230-1.570l.27.280v.79l5 4.990L20.490 19l-4.990-5zm-6 0C7.010 14 5 11.990 5 9.500S7.010 5 9.500 5 14 7.010 14 9.500 11.990 14 9.500 14z" fill="#fff"/></svg>
<svg class="ab" style="left:13.100px;top:181.900px" width="21" height="21" viewBox="0 0 24 24"><path d="M4 8h4V4H4v4zm6 12h4v-4h-4v4zm-6 0h4v-4H4v4zm0-6h4v-4H4v4zm6 0h4v-4h-4v4zm6-10v4h4V4h-4zm-6 4h4V4h-4v4zm6 6h4v-4h-4v4zm0 6h4v-4h-4v4z" fill="#fff"/></svg>
<svg class="ab" style="left:13.300px;top:227.300px" width="21" height="21" viewBox="0 0 24 24"><path d="M3 13h8V3H3v10zm0 8h8v-6H3v6zm10 0h8V11h-8v10zm0-18v6h8V3h-8z" fill="#fff"/></svg>
<svg class="ab" style="left:12.700px;top:916.100px" width="21" height="21" viewBox="0 0 24 24"><path d="M12 2C6.480 2 2 6.480 2 12s4.480 10 10 10 10-4.480 10-10S17.520 2 12 2zm1 17h-2v-2h2v2zm2.070-7.750l-.9.920C13.450 12.900 13 13.500 13 15h-2v-.5c0-1.100.45-2.100 1.170-2.830l1.240-1.260c.37-.36.590-.86.590-1.410 0-1.100-.9-2-2-2s-2 .9-2 2H8c0-2.210 1.790-4 4-4s4 1.790 4 4c0 .88-.36 1.680-.93 2.250z" fill="#fff"/></svg>
<svg class="ab" style="left:12.850px;top:960.800px" width="21" height="21" viewBox="0 0 24 24"><path d="M12 22c1.100 0 2-.9 2-2h-4c0 1.100.89 2 2 2zm6-6v-5c0-3.070-1.640-5.640-4.500-6.320V4c0-.83-.67-1.500-1.500-1.500s-1.500.67-1.500 1.500v.68C7.630 5.360 6 7.920 6 11v5l-2 2v1h16v-1l-2-2z" fill="#fff"/></svg>
<i class="ab" style="left:31px;top:958px;width:4px;height:4px;border-radius:2px;background:#cfdc9c"></i>
<svg class="ab" style="left:12.700px;top:1005.800px" width="21" height="21" viewBox="0 0 24 24"><path d="M12 2C6.480 2 2 6.480 2 12s4.480 10 10 10 10-4.480 10-10S17.520 2 12 2zm0 3c1.660 0 3 1.340 3 3s-1.340 3-3 3-3-1.340-3-3 1.340-3 3-3zm0 14.200c-2.500 0-4.710-1.280-6-3.220.03-1.990 4-3.080 6-3.080 1.990 0 5.970 1.090 6 3.080-1.290 1.940-3.500 3.220-6 3.220z" fill="#fff"/></svg>
<!-- app header right icons -->
<svg class="ab" style="left:1588px;top:121.700px" width="18.600" height="18.600" viewBox="0 0 24 24"><path d="M17.650 6.350C16.200 4.900 14.210 4 12 4c-4.420 0-7.990 3.580-7.990 8s3.570 8 7.990 8c3.730 0 6.840-2.550 7.730-6h-2.080c-.82 2.330-3.040 4-5.650 4-3.310 0-6-2.690-6-6s2.690-6 6-6c1.660 0 3.140.69 4.220 1.780L13 11h7V4l-2.350 2.350z" fill="#2b5c76"/></svg>
<svg class="ab" style="left:1624.200px;top:122.500px" width="17.800" height="17.800" viewBox="0 0 24 24"><path d="M17 3H5c-1.110 0-2 .9-2 2v14c0 1.100.89 2 2 2h14c1.100 0 2-.9 2-2V7l-4-4zm-5 16c-1.660 0-3-1.340-3-3s1.340-3 3-3 3 1.340 3 3-1.340 3-3 3zm3-10H5V5h10v4z" fill="#1d6a90"/></svg>
<svg class="ab" style="left:1662px;top:124px" width="14" height="14" viewBox="0 0 14 14"><path d="M4.300 4V1.500h8.400v7.700H10" fill="none" stroke="#2a6482" stroke-width="1.500"/><rect x="1.300" y="4.500" width="8.300" height="8" fill="#e6f1f6" stroke="#2a6482" stroke-width="1.500"/><path d="M1.300 5h8.300" stroke="#2a6482" stroke-width="2.200"/></svg>
<svg class="ab" style="left:1697px;top:128px" width="18" height="6" viewBox="0 0 18 6"><circle cx="2.600" cy="2.800" r="1.800" fill="#2a5f7a"/><circle cx="8.600" cy="2.800" r="1.800" fill="#2a5f7a"/><circle cx="14.700" cy="2.800" r="1.800" fill="#2a5f7a"/></svg>
<!-- panel header icons -->
<svg class="ab" style="left:75px;top:234px" width="13" height="10" viewBox="0 0 13 10"><path d="M1.200 8.300L6.500 2.600l5.300 5.700" fill="none" stroke="#1f6f8f" stroke-width="1.900"/></svg>
<svg class="ab" style="left:390px;top:237px" width="11" height="11" viewBox="0 0 11 11"><rect x="0.600" y="1.600" width="9.600" height="8.800" rx="0.800" fill="none" stroke="#5a5a5a" stroke-width="1.100"/><path d="M0.600 3.600h9.600M2.800 0.300v2M8 0.300v2" stroke="#5a5a5a" stroke-width="1.100"/><rect x="6" y="6.200" width="2.600" height="2.600" fill="#5a5a5a"/></svg>
<svg class="ab" style="left:487.500px;top:239px" width="10" height="6" viewBox="0 0 10 6"><path d="M1 1l4 4 4-4" fill="none" stroke="#333" stroke-width="1.300"/></svg>
<svg class="ab" style="left:528.500px;top:239px" width="10" height="2" viewBox="0 0 10 2"><path d="M0 1h10" stroke="#2a6482" stroke-width="1.300"/></svg>
<svg class="ab" style="left:581px;top:235.500px" width="10" height="10" viewBox="0 0 10 10"><path d="M0 5h10M5 0v10" stroke="#2a6482" stroke-width="1.300"/></svg>
<svg class="ab" style="left:1467.500px;top:233px" width="15" height="15" viewBox="0 0 15 15"><path d="M9.200 5.800l4-4M1.800 13.200l4-4" stroke="#2270a8" stroke-width="1.500"/><path d="M9.500 0.800h4.700v4.700zM0.800 9.500v4.700h4.700z" fill="#2270a8"/></svg>
<svg class="ab" style="left:1504px;top:234px" width="15" height="12" viewBox="0 0 15 12"><path d="M0.800 6.600l4 4L14 1.200" fill="none" stroke="#7f8c92" stroke-width="1.300"/></svg>
<svg class="ab" style="left:1538px;top:234px" width="19" height="12" viewBox="0 0 19 12"><path d="M4.800 6.600l4 4L18 1.200M0.800 6.600l4 4M13.500 1.200L8.800 6" fill="none" stroke="#7f8c92" stroke-width="1.200"/></svg>
<svg class="ab" style="left:1576px;top:233px" width="14" height="14" viewBox="0 0 14 14"><path d="M2 4.800h6.200a4.300 4.300 0 1 1-3.900 6" fill="none" stroke="#7f8c92" stroke-width="1.300"/><path d="M5.300 1L1.600 4.800l3.700 3.600" fill="none" stroke="#7f8c92" stroke-width="1.300"/></svg>
<svg class="ab" style="left:1609.500px;top:230.500px" width="19.500" height="19.500" viewBox="0 0 24 24"><path d="M12.500 8c-2.650 0-5.050.99-6.900 2.600L2 7v9h9l-3.620-3.620c1.390-1.160 3.160-1.880 5.120-1.880 3.540 0 6.550 2.310 7.600 5.500l2.370-.78C21.080 11.030 17.150 8 12.500 8z" fill="#7a868c"/></svg>
<svg class="ab" style="left:1648px;top:233px" width="14.600" height="14.200" viewBox="0 0 15 14.500"><rect x="0.200" y="0.200" width="14.600" height="10.900" rx="1.400" fill="#727e85"/><path d="M3.300 10.800h3.600l-2.700 3.400z" fill="#727e85"/><path d="M3 3.300h9M3 5.600h9M3 7.900h6.500" stroke="#d3e0e5" stroke-width="1.100"/></svg>
<svg class="ab" style="left:1689px;top:234px" width="4" height="13" viewBox="0 0 4 13"><circle cx="2" cy="2.200" r="1.400" fill="#36454c"/><circle cx="2" cy="6.600" r="1.400" fill="#36454c"/><circle cx="2" cy="11" r="1.400" fill="#36454c"/></svg>

<div id="frameL"></div>
<div id="frameR"></div>
<div id="frameB"></div>
</body>
</html>
